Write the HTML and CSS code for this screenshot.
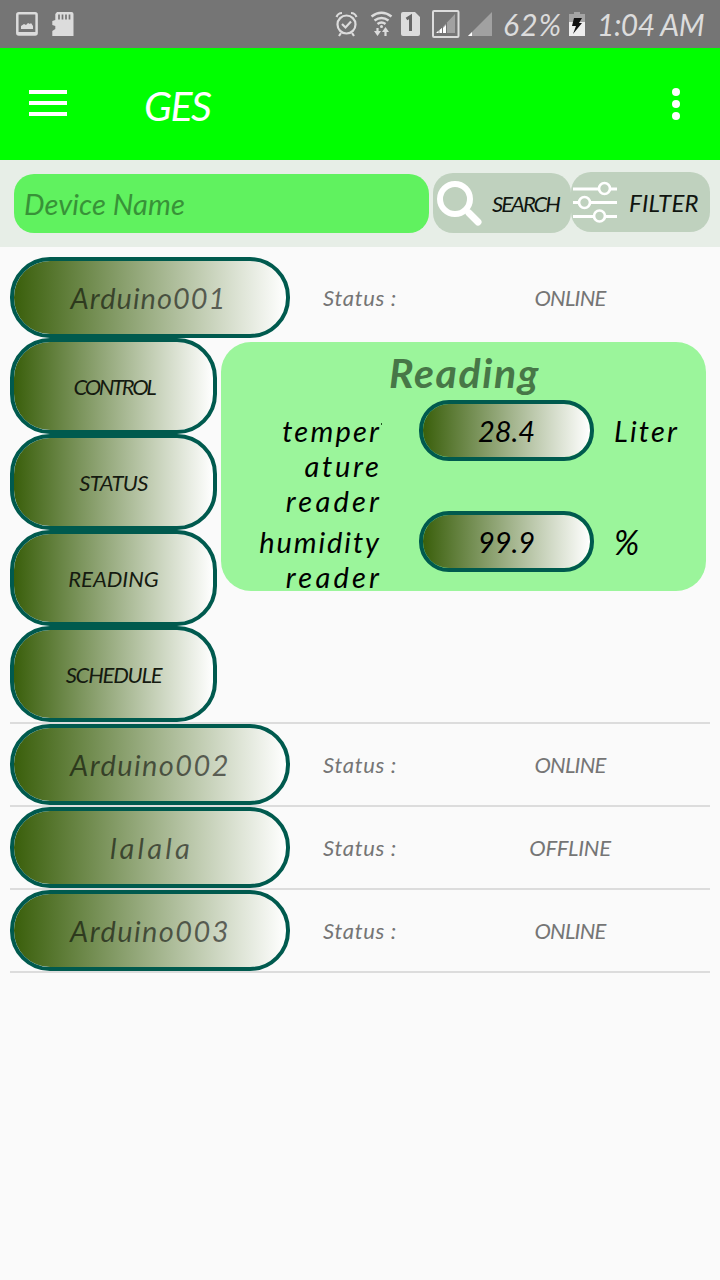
FILE: index.html
```html
<!DOCTYPE html>
<html lang="en">
<head>
<meta charset="utf-8">
<title>GES</title>
<link rel="stylesheet" href="styles.css">
</head>
<body>
<div class="statusbar">
  <svg class="status-icons" width="80" height="48" viewBox="0 0 80 48">
    <rect x="17.300" y="13.200" width="19.300" height="21.400" rx="1.500" fill="none" stroke="#dcdcdc" stroke-width="2.500"/>
    <path d="M18 32h18v3H18zM21 29v-3l3-2 2 1 2-2 2 1 1-1 2 3v3z" fill="#dcdcdc"/>
    <path d="M57 12h14.500q2 0 2 2v22H52.300v-5l3-2v-3l-3-1v-4l3-1v-6z" fill="#dcdcdc"/>
    <path d="M59 14.500v5M62.500 14.500v5M66 14.500v5M69.500 14.500v5" stroke="#757575" stroke-width="1.700"/>
  </svg>
  <svg class="status-icons" width="170" height="48" viewBox="330 0 170 48">
    <g fill="none" stroke="#dcdcdc" stroke-width="2.200">
      <circle cx="346.500" cy="24.500" r="9"/>
      <path d="M342 24l3.500 3.500 5.500-6M341 33l-2 3M352 33l2 3M336.500 17q1.500-4 5.500-4M351 13q4 0 5.500 4"/>
      <path d="M371.500 16.500q10-7.500 20 0M374.500 20.500q7-5 14 0M377.500 24q4-3 8 0" stroke-width="2.500"/>
      <path d="M377.500 28v5M385.500 36v-5"/>
      <rect x="433" y="11" width="25.500" height="26" rx="1" stroke-width="2"/>
    </g>
    <circle cx="381.500" cy="26.500" r="1.500" fill="#dcdcdc"/>
    <path d="M374 31h7l-3.500 5zM382 32h7l-3.500-5z" fill="#dcdcdc"/>
    <path d="M403 12h12l5 5v17q0 2-2 2h-15q-2 0-2-2V14q0-2 2-2z" fill="#dcdcdc"/>
    <path d="M406.500 19l4-2.500V31" fill="none" stroke="#666" stroke-width="3"/>
    <path d="M455 14v19h-18zM492 12v24h-24z" fill="#a1a1a1"/>
    <path d="M438.500 30.500v2.500h-2.500zM442.500 27.500v5.500h-3v-3zM446 25v8h-3v-5zM468 36l4-4v4z" fill="#fff"/>
    <path d="M442.500 27v6M446.500 23v10" stroke="#757575"/>
  </svg>
  <span class="t battery-pct">62%</span>
  <svg class="battery" width="16" height="24" viewBox="0 0 16 24">
    <path d="M5 0h6v2h5v8H0V2h5z" fill="#a4a4a4"/><path d="M0 10h16v14H0z" fill="#eee"/>
    <path d="M5 6h8l-3 5h3L4 22l3-8H3z" fill="#111"/>
  </svg>
  <span class="t clock">1:04 AM</span>
</div>
<header class="appbar">
  <svg class="menu" width="38" height="26" viewBox="0 0 38 26"><path d="M0 2h38M0 13h38M0 24h38" stroke="#fff" stroke-width="4"/></svg>
  <h1 class="t brand">GES</h1>
  <svg class="more" width="8" height="32" viewBox="0 0 8 32" fill="#fff"><circle cx="4" cy="4" r="4"/><circle cx="4" cy="16" r="4"/><circle cx="4" cy="28" r="4"/></svg>
</header>
<section class="searchbar">
  <div class="field"><span class="t hint">Device Name</span></div>
  <div class="tool search">
    <svg width="46" height="46" viewBox="0 0 46 46" fill="none" stroke="#fff"><circle cx="19" cy="19" r="15" stroke-width="6"/><path d="M29 29l5 5" stroke-width="5"/><path d="M33 33l9 9" stroke-width="7" stroke-linecap="round"/></svg>
    <span class="t search-text">SEARCH</span>
  </div>
  <div class="tool filter">
    <svg width="46" height="44" viewBox="0 0 46 44" fill="none" stroke="#fff"><path d="M1 9h25M38 9h7M1 22.500h6M18 22.500h27M1 36.500h20M33 36.500h12" stroke-width="3"/><g stroke-width="2.700"><circle cx="32.500" cy="8.500" r="5.500"/><circle cx="12.500" cy="22.500" r="5.500"/><circle cx="27.500" cy="36" r="5.500"/></g></svg>
    <span class="t filter-text">FILTER</span>
  </div>
</section>
<main class="devices">
  <section class="device">
    <div class="row"><div class="pill"><span class="t name">Arduino001</span></div><span class="t label">Status :</span><div class="state"><span class="t online">ONLINE</span></div></div>
    <div class="details">
      <nav class="actions">
        <div class="action"><span class="t control">CONTROL</span></div>
        <div class="action"><span class="t status">STATUS</span></div>
        <div class="action"><span class="t reading">READING</span></div>
        <div class="action"><span class="t schedule">SCHEDULE</span></div>
      </nav>
      <div class="panel">
        <h2 class="t title">Reading</h2>
        <div class="metric first">
          <div class="metric-name"><span class="t temper">temper</span><span class="t ature">ature</span><span class="t reader">reader</span></div>
          <div class="value"><span class="t number">28.4</span></div><span class="t unit">Liter</span>
        </div>
        <div class="metric">
          <div class="metric-name"><span class="t humidity">humidity</span><span class="t reader">reader</span></div>
          <div class="value"><span class="t number">99.9</span></div><span class="t percent">%</span>
        </div>
      </div>
    </div>
  </section>
  <section class="device"><div class="row"><div class="pill"><span class="t name wide">Arduino002</span></div><span class="t label">Status :</span><div class="state"><span class="t online">ONLINE</span></div></div></section>
  <section class="device"><div class="row"><div class="pill"><span class="t lalala">lalala</span></div><span class="t label">Status :</span><div class="state"><span class="t offline">OFFLINE</span></div></div></section>
  <section class="device"><div class="row"><div class="pill"><span class="t name wide">Arduino003</span></div><span class="t label">Status :</span><div class="state"><span class="t online">ONLINE</span></div></div></section>
</main>
</body>
</html>
```
FILE: styles.css
```css
* { box-sizing: border-box; }
body { margin: 0; width: 720px; height: 1280px; overflow: hidden; background: #fafafa; font-family: Lato, "Open Sans", sans-serif; font-style: italic; color: #000; }
svg { display: block; flex: none; }
.t { white-space: nowrap; flex: none; }
.statusbar { height: 48px; background: #757575; display: flex; align-items: center; color: #dcdcdc; font-size: 30px; }
.status-icons + .status-icons { margin-left: 250px; }
.battery-pct { width: 69px; padding-left: 3px; letter-spacing: 1.2px; }
.clock { margin-left: 12px; letter-spacing: -0.5px; }
.appbar { height: 112px; background: #0f0; display: flex; align-items: center; padding: 0 40px 0 29px; color: #fff; }
.menu { margin-bottom: 2px; }
.brand { margin: 0 auto 0 77px; padding-top: 3px; font-size: 41px; font-weight: 400; letter-spacing: -1.5px; }
.searchbar { height: 87px; background: #e7eee7; display: flex; padding: 12px 10px 0 14px; }
.field { width: 415px; height: 59px; margin-top: 2px; background: #60f25f; border-radius: 20px; display: flex; align-items: center; padding-left: 10px; color: #389238; font-size: 29px; letter-spacing: 0.1px; }
.tool { display: flex; align-items: center; height: 60px; border-radius: 20px; background: #bfd1be; color: #101510; }
.search { width: 138px; margin: 1px 0 0 4px; padding-left: 3px; font-size: 22px; }
.search-text { margin-left: 10px; letter-spacing: -2px; }
.filter { width: 139px; padding-left: 1px; font-size: 24px; }
.filter-text { margin-left: 11px; letter-spacing: 0.2px; }
.devices { padding: 10px 10px 0; }
.device { border-bottom: 2px solid #dcdcdc; }
.row { height: 81px; display: flex; align-items: center; color: #757575; font-size: 22px; }
.pill, .action, .value { border: 4px solid #005a4e; background: linear-gradient(90deg, #3a5f0b, #fff) padding-box; display: flex; align-items: center; justify-content: center; flex: none; }
.pill { width: 280px; height: 81px; border-radius: 40px; color: rgba(0,0,0,.56); font-size: 29px; }
.name { letter-spacing: 1px; margin-right: 3px; }
.wide { letter-spacing: 1.4px; margin-right: 0; }
.lalala { letter-spacing: 3.2px; margin-right: -3px; }
.label { margin-left: 33px; width: 74px; letter-spacing: 0.7px; }
.state { flex: 1; display: flex; justify-content: center; padding-left: 33px; }
.online { letter-spacing: -0.8px; }
.offline { letter-spacing: -0.3px; }
.details { display: flex; align-items: flex-start; }
.action { width: 207px; height: 96px; border-radius: 40px; font-size: 22px; color: #151a10; }
.control { letter-spacing: -2.3px; margin-right: -1px; }
.status { letter-spacing: -0.7px; }
.schedule { letter-spacing: -1.2px; margin-right: 0; }
.panel { width: 485px; height: 249px; margin: 4px 0 0 4px; background: #9bf59b; border-radius: 30px; font-size: 29px; }
.title { height: 58px; margin: 0 -2px 0 0; padding-top: 4px; line-height: 54px; font-size: 41px; letter-spacing: 1.6px; text-align: center; color: #477747; }
.metric { display: flex; align-items: flex-start; line-height: 35px; }
.first { height: 111px; }
.metric-name { width: 158px; margin-right: 40px; padding-top: 13px; display: flex; flex-direction: column; align-items: flex-end; }
.temper { letter-spacing: 2.2px; margin-right: -2.2px; position: relative; }
.temper::after { content: ""; position: absolute; right: -1px; top: 10px; width: 1px; height: 2px; background: #245424; }
.ature { letter-spacing: 2.7px; margin-right: -2.7px; }
.reader { letter-spacing: 3.2px; margin-right: -3.2px; }
.humidity { letter-spacing: 1.9px; margin-right: -1.9px; }
.value { width: 175px; height: 61px; border-radius: 30px; margin-right: 20px; }
.unit, .percent { padding-top: 13px; }
.unit { letter-spacing: 2.2px; }
.percent { font-size: 34px; }
```
